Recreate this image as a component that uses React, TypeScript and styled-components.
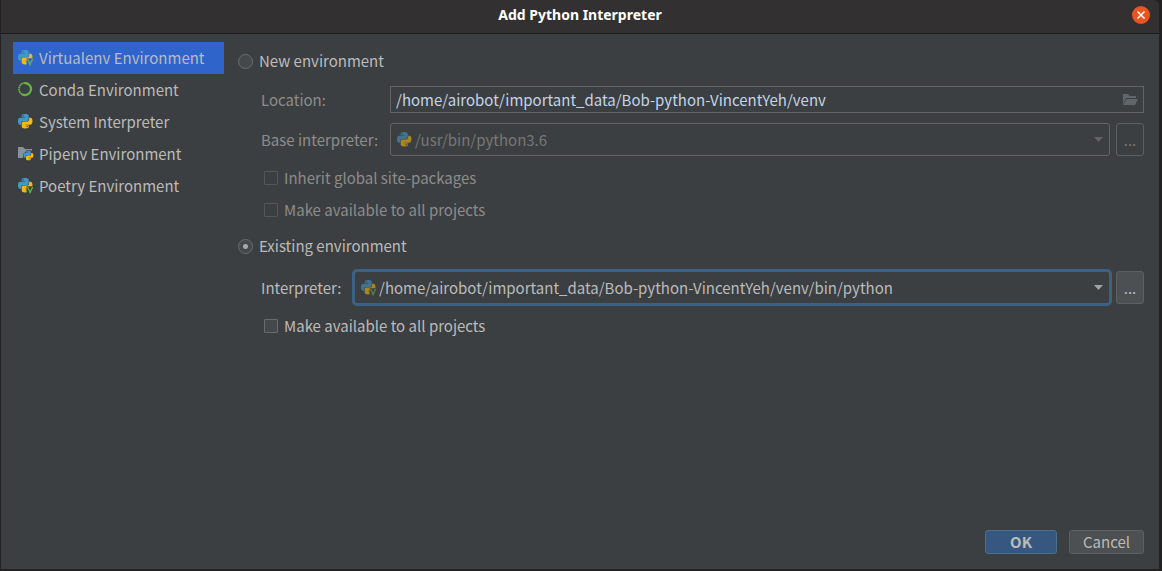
import React, { useState } from 'react';
import styled, { createGlobalStyle, css } from 'styled-components';

const GlobalStyle = createGlobalStyle`
  *, *::before, *::after { box-sizing: border-box; }
  html, body, #root { height: 100%; }
  body {
    margin: 0;
    background: #222222;
    color: #bbbbbb;
    font: 15px/24px "Noto Sans CJK SC", "Open Sans", sans-serif;
  }
  button, input, select { font: inherit; color: inherit; margin: 0; }
`;

const Desktop = styled.div`
  min-height: 100%;
  display: flex;
  padding: 0 3px 2px 1px;
`;

const Dialog = styled.section`
  flex: 1;
  min-width: 0;
  display: flex;
  flex-direction: column;
  background: #3c3f41;
  border-radius: 0 6px 0 0;
  overflow: hidden;
`;

const TitleBar = styled.header`
  display: grid;
  grid-template-columns: 1fr auto 1fr;
  align-items: center;
  height: 34px;
  padding: 0 9px 3px 9px;
  background: #323030;
  border-bottom: 1px solid #1c1c1c;
`;

const Title = styled.h1`
  grid-column: 2;
  margin: 0;
  color: #ffffff;
  font: bold 14px/24px "Noto Sans", sans-serif;
`;

const CloseButton = styled.button`
  justify-self: end;
  width: 18px;
  height: 18px;
  padding: 0;
  border: 0;
  border-radius: 50%;
  background: #e95420;
  display: grid;
  place-items: center;
`;

const Body = styled.div`
  flex: 1;
  display: flex;
  gap: 14px;
  padding: 8px 15px 0 12px;
`;

const Sidebar = styled.nav`
  flex: 0 0 211px;
`;

const SidebarItem = styled.button<{ $selected: boolean }>`
  display: flex;
  align-items: center;
  gap: 5px;
  width: 100%;
  height: 32px;
  padding: 0 5px;
  border: 0;
  background: ${(p) => (p.$selected ? '#2f65ca' : 'transparent')};
  text-align: left;
  white-space: nowrap;
`;

const Form = styled.form`
  flex: 1;
  min-width: 0;
  padding-top: 7px;
`;

const Choice = styled.label<{ $dim?: boolean }>`
  display: flex;
  align-items: center;
  gap: 6px;
  height: 24px;
  color: ${(p) => (p.$dim ? '#8c8c8c' : '#bbbbbb')};
`;

const Radio = styled.input.attrs({ type: 'radio' })`
  appearance: none;
  width: 15px;
  height: 15px;
  border: 1px solid #6b6b6b;
  border-radius: 50%;
  background: #43494a;
  &:checked {
    background: radial-gradient(circle, #a8a8a8 0 2px, #43494a 3px);
  }
`;

const Checkbox = styled.input.attrs({ type: 'checkbox' })`
  appearance: none;
  width: 14px;
  height: 14px;
  border: 1px solid #6b6b6b;
  border-radius: 1px;
  background: #43494a;
  &:disabled {
    border-color: #545556;
    background: transparent;
  }
`;

const Group = styled.div<{ $top: number; $bottom: number; $gap: number }>`
  display: grid;
  gap: ${(p) => p.$gap}px;
  padding: ${(p) => p.$top}px 0 ${(p) => p.$bottom}px 23px;
`;

const Options = styled.div`
  display: grid;
  gap: 8px;
  padding-left: 3px;
`;

const Field = styled.div<{ $label: number }>`
  display: grid;
  grid-template-columns: ${(p) => p.$label}px 1fr;
  align-items: center;
`;

const FieldLabel = styled.label<{ $dim?: boolean }>`
  color: ${(p) => (p.$dim ? '#8c8c8c' : '#bbbbbb')};
  white-space: nowrap;
`;

const Controls = styled.div<{ $gap: number }>`
  display: flex;
  align-items: center;
  gap: ${(p) => p.$gap}px;
`;

const PathBox = styled.div`
  display: flex;
  align-items: center;
  height: 27px;
  padding: 0 5px;
  border: 1px solid #646464;
`;

const PathInput = styled.input`
  flex: 1;
  min-width: 0;
  height: 24px;
  padding: 0;
  border: 0;
  outline: 0;
  background: transparent;
  color: #c3d4e8;
`;

const IconButton = styled.button`
  display: flex;
  padding: 0;
  border: 0;
  background: none;
`;

const Combo = styled.div<{ $focused?: boolean }>`
  flex: 1;
  min-width: 0;
  display: grid;
  align-items: center;
  height: 33px;
  border: 1px solid #646464;
  border-radius: 3px;
  color: #777777;
  & > * { grid-area: 1 / 1; }
  & > svg { margin-left: 6px; opacity: 0.6; pointer-events: none; }
  & > svg:last-child { margin: 0 6px 0 0; justify-self: end; opacity: 1; }
  ${(p) =>
    p.$focused &&
    css`
      height: 37px;
      border: 3px solid #3d6185;
      border-radius: 5px;
      color: #bbbbbb;
    `}
`;

const Select = styled.select`
  appearance: none;
  width: 100%;
  height: 26px;
  padding: 0 24px;
  border: 0;
  outline: 0;
  background: transparent;
  &:disabled { opacity: 1; }
`;

const BrowseButton = styled.button`
  width: 28px;
  height: 33px;
  padding: 0;
  border: 1px solid #5e6060;
  border-radius: 3px;
  background: #4c5052;
  &:disabled {
    background: transparent;
    color: #777777;
  }
`;

const Footer = styled.footer`
  display: flex;
  justify-content: flex-end;
  gap: 12px;
  padding: 0 15px 15px;
`;

const DialogButton = styled.button<{ $primary?: boolean }>`
  min-width: ${(p) => (p.$primary ? 72 : 75)}px;
  height: 24px;
  padding: 0;
  border: 1px solid ${(p) => (p.$primary ? '#4c708c' : '#5e6060')};
  border-radius: 3px;
  background: ${(p) => (p.$primary ? '#365880' : '#4c5052')};
  font-weight: ${(p) => (p.$primary ? 700 : 400)};
  line-height: 22px;
`;

const SNAKE_TOP =
  'M14.25.18l.9.2.73.26.59.3.45.32.34.34.25.34.16.33.1.3.04.26.02.2-.01.13V8.5l-.05.63-.13.55-.21.46-.26.38-.3.31-.33.25-.35.19-.35.14-.33.1-.3.07-.26.04-.21.02H8.77l-.69.05-.59.14-.5.22-.41.27-.33.32-.27.35-.2.36-.15.37-.1.35-.07.32-.04.27-.02.21v3.06H3.17l-.21-.03-.28-.07-.32-.12-.35-.18-.36-.26-.36-.36-.35-.46-.32-.59-.28-.73-.21-.88-.14-1.05-.05-1.23.06-1.22.16-1.04.24-.87.32-.71.36-.57.4-.44.42-.33.42-.24.4-.16.36-.1.32-.05.24-.01h.16l.06.01h8.16v-.83H6.18l-.01-2.75-.02-.37.05-.34.11-.31.17-.28.25-.26.31-.23.38-.2.44-.18.51-.15.58-.12.64-.1.71-.06.77-.04.84-.02 1.27.05zm-6.3 1.98l-.23.33-.08.41.08.41.23.34.33.22.41.09.41-.09.33-.22.23-.34.08-.41-.08-.41-.23-.33-.33-.22-.41-.09-.41.09z';
const SNAKE_BOTTOM =
  'M21.04 6.11l.28.06.32.12.35.18.36.27.36.35.35.47.32.59.28.73.21.88.14 1.04.05 1.23-.06 1.23-.16 1.04-.24.86-.32.71-.36.57-.4.45-.42.33-.42.24-.4.16-.36.09-.32.05-.24.02-.16-.01h-8.22v.82h5.84l.01 2.76.02.36-.05.34-.11.31-.17.29-.25.25-.31.24-.38.2-.44.17-.51.15-.58.13-.64.09-.71.07-.77.04-.84.01-1.27-.04-1.07-.14-.9-.2-.73-.25-.59-.3-.45-.33-.34-.34-.25-.34-.16-.33-.1-.3-.04-.25-.02-.2.01-.13v-5.34l.05-.64.13-.54.21-.46.26-.38.3-.32.33-.24.35-.2.35-.14.33-.1.3-.06.26-.04.21-.02.13-.01h5.84l.69-.05.59-.14.5-.21.41-.28.33-.32.27-.35.2-.36.15-.36.1-.35.07-.32.04-.28.02-.21V6.07h2.09l.14.01zm-6.47 14.25l-.23.33-.08.41.08.41.23.33.33.23.41.08.41-.08.33-.23.23-.33.08-.41-.08-.41-.23-.33-.33-.23-.41-.08-.41.08z';

const Snakes = () => (
  <>
    <path fill="#4297c9" d={SNAKE_TOP} />
    <path fill="#f2ba0c" d={SNAKE_BOTTOM} />
  </>
);

const PythonIcon = () => (
  <svg width="16" height="16" viewBox="0 0 16 16" aria-hidden="true">
    <g transform="scale(.6)">
      <Snakes />
    </g>
  </svg>
);

const VenvIcon = () => (
  <svg width="16" height="16" viewBox="0 0 16 16" aria-hidden="true">
    <clipPath id="venv-cut">
      <path d="M0 0h16v8.200H8.600V16H0z" />
    </clipPath>
    <g clipPath="url(#venv-cut)">
      <g transform="scale(.6)">
        <Snakes />
      </g>
    </g>
    <path d="M9.600 9l2.500 5.600L14.600 9" fill="none" stroke="#62b543" strokeWidth="1.300" />
  </svg>
);

const CondaIcon = () => (
  <svg width="16" height="16" viewBox="0 0 16 16" fill="none" aria-hidden="true">
    <path d="M7 1A6 6 0 1 1 4 12.200" stroke="#62b543" strokeWidth="2.300" />
    <path d="M4 12.200A6 6 0 0 1 7 1" stroke="#62b543" strokeWidth="1.800" strokeDasharray="1.800 .5" />
  </svg>
);

const PipenvIcon = () => (
  <svg width="16" height="16" viewBox="0 0 16 16" aria-hidden="true">
    <path fill="#87939a" d="M0 1h5l2 2h7v2L12.500 4H8.500L7.500 6 5 8v4H0z" />
    <g transform="translate(5.500 4.500) scale(.41)">
      <Snakes />
    </g>
  </svg>
);

const FolderIcon = () => (
  <svg width="16" height="16" viewBox="0 0 16 16" fill="#5f676b" aria-hidden="true">
    <path d="M1 13V2h5l1.500 2H14v2H4z" />
    <path d="M4.500 7H16l-3 6H1.500z" />
  </svg>
);

const Caret = ({ color }: { color: string }) => (
  <svg width="9" height="5" viewBox="0 0 9 5" aria-hidden="true">
    <path d="M0 0h9L4.500 5z" fill={color} />
  </svg>
);

const environments = [
  { name: 'Virtualenv Environment', Icon: VenvIcon },
  { name: 'Conda Environment', Icon: CondaIcon },
  { name: 'System Interpreter', Icon: PythonIcon },
  { name: 'Pipenv Environment', Icon: PipenvIcon },
  { name: 'Poetry Environment', Icon: VenvIcon },
];

export default function App() {
  const [selected, setSelected] = useState(0);
  return (
    <Desktop>
      <GlobalStyle />
      <Dialog aria-labelledby="dialog-title">
        <TitleBar>
          <Title id="dialog-title">Add Python Interpreter</Title>
          <CloseButton type="button" aria-label="Close">
            <svg width="10" height="10" viewBox="0 0 10 10" aria-hidden="true">
              <path d="M1.500 1.500l7 7M8.500 1.500l-7 7" stroke="#fff" strokeWidth="1.500" />
            </svg>
          </CloseButton>
        </TitleBar>
        <Body>
          <Sidebar aria-label="Environment type">
            {environments.map(({ name, Icon }, i) => (
              <SidebarItem key={name} type="button" $selected={i === selected} onClick={() => setSelected(i)}>
                <Icon />
                {name}
              </SidebarItem>
            ))}
          </Sidebar>
          <Form id="interpreter-form" onSubmit={(e) => e.preventDefault()}>
            <Choice>
              <Radio name="environment" value="new" />
              New environment
            </Choice>
            <Group $top={13} $bottom={12} $gap={10}>
              <Field $label={129}>
                <FieldLabel htmlFor="location" $dim>Location:</FieldLabel>
                <PathBox>
                  <PathInput id="location" defaultValue="/home/airobot/important_data/Bob-python-VincentYeh/venv" />
                  <IconButton type="button" aria-label="Choose folder">
                    <FolderIcon />
                  </IconButton>
                </PathBox>
              </Field>
              <Field $label={129}>
                <FieldLabel htmlFor="base" $dim>Base interpreter:</FieldLabel>
                <Controls $gap={6}>
                  <Combo>
                    <PythonIcon />
                    <Select id="base" disabled>
                      <option>/usr/bin/python3.6</option>
                    </Select>
                    <Caret color="#646464" />
                  </Combo>
                  <BrowseButton type="button" disabled>...</BrowseButton>
                </Controls>
              </Field>
              <Options>
                <Choice $dim>
                  <Checkbox disabled />
                  Inherit global site-packages
                </Choice>
                <Choice $dim>
                  <Checkbox disabled />
                  Make available to all projects
                </Choice>
              </Options>
            </Group>
            <Choice>
              <Radio name="environment" value="existing" defaultChecked />
              Existing environment
            </Choice>
            <Group $top={11} $bottom={12} $gap={8}>
              <Field $label={91}>
                <FieldLabel htmlFor="interpreter">Interpreter:</FieldLabel>
                <Controls $gap={4}>
                  <Combo $focused>
                    <VenvIcon />
                    <Select id="interpreter">
                      <option>/home/airobot/important_data/Bob-python-VincentYeh/venv/bin/python</option>
                    </Select>
                    <Caret color="#a0a3a5" />
                  </Combo>
                  <BrowseButton type="button">...</BrowseButton>
                </Controls>
              </Field>
              <Options>
                <Choice>
                  <Checkbox />
                  Make available to all projects
                </Choice>
              </Options>
            </Group>
          </Form>
        </Body>
        <Footer>
          <DialogButton type="submit" form="interpreter-form" $primary>OK</DialogButton>
          <DialogButton type="button">Cancel</DialogButton>
        </Footer>
      </Dialog>
    </Desktop>
  );
}
